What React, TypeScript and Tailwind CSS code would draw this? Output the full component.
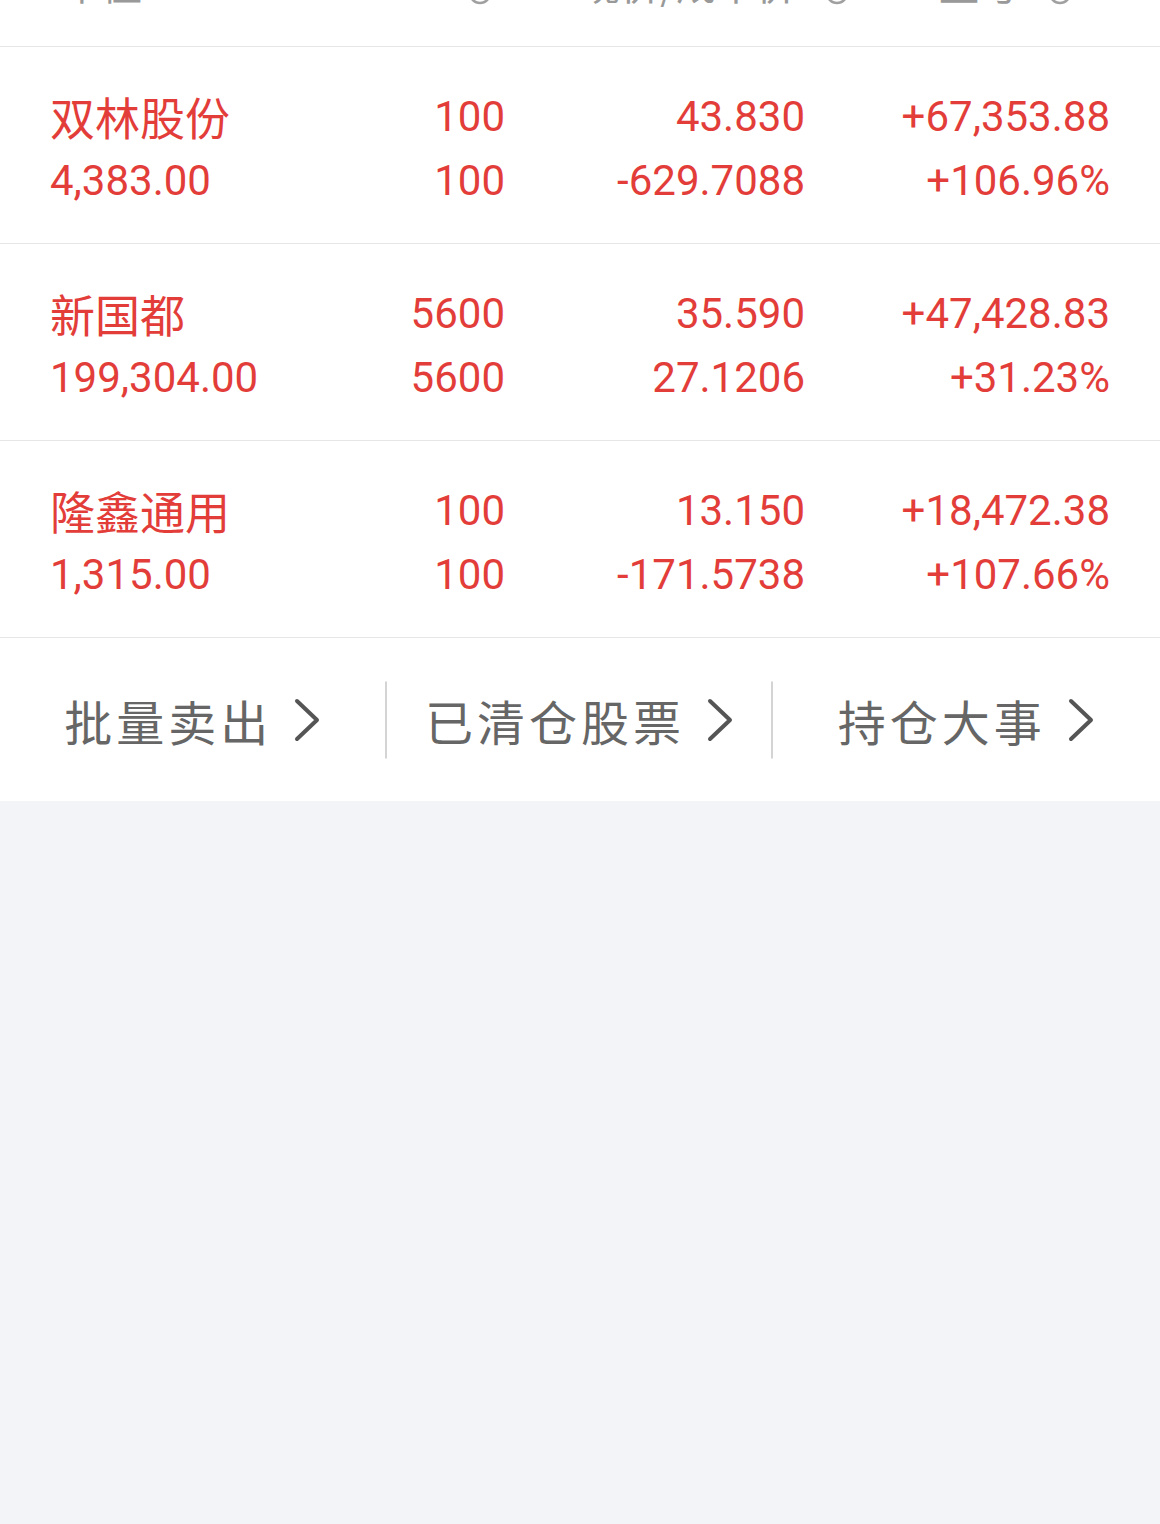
import React from "react";

const rows = [
  { name: "双林股份", value: "4,383.00", hold: "100", avail: "100", price: "43.830", cost: "-629.7088", pl: "+67,353.88", pct: "+106.96%" },
  { name: "新国都", value: "199,304.00", hold: "5600", avail: "5600", price: "35.590", cost: "27.1206", pl: "+47,428.83", pct: "+31.23%" },
  { name: "隆鑫通用", value: "1,315.00", hold: "100", avail: "100", price: "13.150", cost: "-171.5738", pl: "+18,472.38", pct: "+107.66%" },
];

const cjk = { fontFamily: '"Noto Sans CJK SC", "Noto Sans", sans-serif' };
const num = { fontFamily: 'Roboto, "Noto Sans CJK SC", sans-serif' };

const Info = () => (
  <svg width="26" height="26" viewBox="0 0 26 26" className="inline-block ml-[28px] shrink-0 relative top-[10px]">
    <circle cx="13" cy="13" r="10" fill="none" stroke="#a0a0a0" strokeWidth="2.5" />
  </svg>
);

const Chevron = () => (
  <svg width="30" height="44" viewBox="0 0 30 44" className="ml-[20px] shrink-0">
    <path d="M5 3 L25 22 L5 41" fill="none" stroke="#555" strokeWidth="4" strokeLinecap="round" strokeLinejoin="round" />
  </svg>
);

const HoldingRow = ({ r }: { r: (typeof rows)[number] }) => (
  <div className="grid grid-cols-[1fr_200px_300px_305px] px-[50px] pt-[38px] pb-[30px] border-b border-[#e6e6e6] text-[#e33d3a] text-[42px] leading-[64px]" style={num}>
    <div>
      <div className="text-[45px]" style={cjk}>{r.name}</div>
      <div>{r.value}</div>
    </div>
    <div className="text-right">
      <div>{r.hold}</div>
      <div>{r.avail}</div>
    </div>
    <div className="text-right">
      <div>{r.price}</div>
      <div>{r.cost}</div>
    </div>
    <div className="text-right">
      <div>{r.pl}</div>
      <div>{r.pct}</div>
    </div>
  </div>
);

const ActionLink = ({ label, last }: { label: string; last?: boolean }) => (
  <div className="flex-1 flex items-center justify-center relative">
    <span className="text-[48px] text-[#666] tracking-[4px] whitespace-nowrap" style={cjk}>{label}</span>
    <Chevron />
    {!last && <div className="absolute right-0 top-1/2 -translate-y-1/2 h-[77px] w-[2px] bg-[#d4d4d4]" />}
  </div>
);

export default function App() {
  return (
    <div className="min-h-[1524px] bg-[#f3f4f8]">
      <div className="bg-white">
        <div className="h-[47px] overflow-hidden border-b border-[#e6e6e6]">
          <div className="grid grid-cols-[1fr_200px_300px_305px] px-[50px] -mt-[37px] h-[40px] text-[40px] leading-[40px] text-[#999] whitespace-nowrap" style={cjk}>
            <div className="pl-[12px]">市值</div>
            <div className="flex justify-end items-center pr-[12px]">
              <span className="-mt-[14px]">持仓/可用</span>
              <Info />
            </div>
            <div className="flex justify-end items-center -mr-[45px]">现价/成本价<Info /></div>
            <div className="flex justify-end items-center pr-[37px]">盈亏<Info /></div>
          </div>
        </div>
        {rows.map((r) => (
          <HoldingRow key={r.name} r={r} />
        ))}
        <div className="h-[163px] flex items-center">
          <ActionLink label="批量卖出" />
          <ActionLink label="已清仓股票" />
          <ActionLink label="持仓大事" last />
        </div>
      </div>
    </div>
  );
}
